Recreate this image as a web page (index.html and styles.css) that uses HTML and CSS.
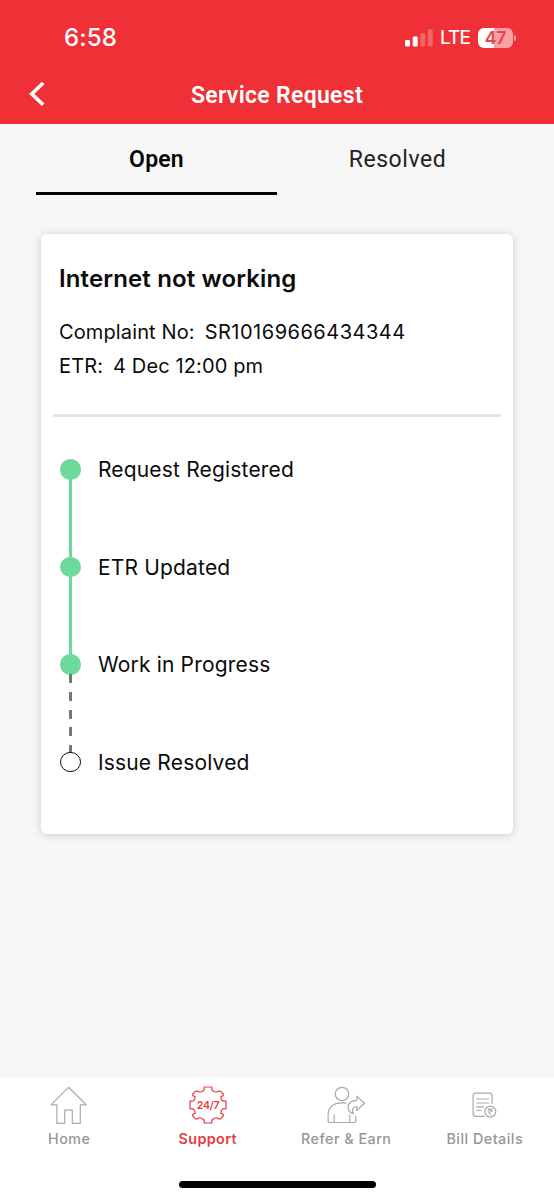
FILE: index.html
```
<!DOCTYPE html>
<html lang="en">
<head>
<meta charset="utf-8">
<title>Service Request</title>
<link rel="stylesheet" href="styles.css">
</head>
<body>
<div class="app">
  <header class="header">
    <div class="status">
      <span class="time">6:58</span>
      <div class="status-right">
        <svg class="signal" width="28" height="18" viewBox="0 0 28 18" fill="#fff">
          <rect x="0" y="11" width="5" height="6.5" rx="1.3"/>
          <rect x="7.7" y="7.5" width="5" height="10" rx="1.3"/>
          <rect x="15.2" y="4" width="5" height="13.5" rx="1.3" opacity=".25"/>
          <rect x="22.7" y="0.3" width="5" height="17.2" rx="1.3" opacity=".25"/>
        </svg>
        <span class="network">LTE</span>
        <div class="battery"><span class="battery-level">47</span><i class="battery-cap"></i></div>
      </div>
    </div>
    <div class="titlebar">
      <svg class="back" width="18" height="26" viewBox="0 0 18 26"><path d="M15.2 2 3.7 12.9 15.2 23.8" fill="none" stroke="#fff" stroke-width="3.6"/></svg>
      <h1 class="title">Service Request</h1>
    </div>
  </header>
  <nav class="tabs">
    <div class="tab tab-active"><span>Open</span></div>
    <div class="tab"><span>Resolved</span></div>
  </nav>
  <main class="main">
    <section class="card">
      <h2 class="card-title">Internet not working</h2>
      <div class="row"><span class="row-label">Complaint No:</span><span class="row-value number">SR10169666434344</span></div>
      <div class="row"><span class="row-label">ETR:</span><span class="row-value">4 Dec 12:00 pm</span></div>
      <div class="divider"></div>
      <ol class="steps">
        <li class="step step-done"><i class="dot"></i><span>Request Registered</span></li>
        <li class="step step-done"><i class="dot"></i><span>ETR Updated</span></li>
        <li class="step step-now"><i class="dot"></i><span>Work in Progress</span></li>
        <li class="step"><i class="dot dot-open"></i><span>Issue Resolved</span></li>
      </ol>
    </section>
  </main>
  <footer class="bottom">
    <div class="nav">
      <div class="nav-item">
        <svg width="40" height="40" viewBox="0 0 40 40" class="icon"><path d="M19.5 2.3 2 19.8H7.9V38.3H15.7V25.2H23.3V38.3H31.3V19.8H37.2Z"/></svg>
        <span>Home</span>
      </div>
      <div class="nav-item nav-active">
        <svg width="40" height="40" viewBox="-20 -20 40 40" class="icon gear">
          <path d="M-3.8-15.2V-18H3.8V-15.2L5.4-13.8 8.3-12.8 10.4-13.8H12.4L15.2-11V-9.4L12.8-8.3 13.4-5.4 15.2-3.8H18V3.8H15.2L13.4 5.4 12.8 8.3 15.2 9.4V11L12.4 13.8H10.4L8.3 12.8 5.4 13.8 3.8 15.2V18H-3.8V15.2L-5.4 13.8-8.3 12.8-10.4 13.8H-12.4L-15.2 11V9.4L-12.8 8.3-13.4 5.4-15.2 3.8H-18V-3.8H-15.2L-13.4-5.4-12.8-8.3-15.2-9.4V-11L-12.4-13.8H-10.4L-8.3-12.8-5.4-13.8Z"/>
          <text x="0" y="4" text-anchor="middle">24/7</text>
        </svg>
        <span>Support</span>
      </div>
      <div class="nav-item">
        <svg width="40" height="40" viewBox="0 0 40 40" class="icon">
          <circle cx="16" cy="9" r="6.7"/>
          <path d="M20 17.9H16C7 17.9 2.1 22.5 2.1 30V35.8Q2.1 37.5 3.8 37.5H28Q29.8 37.5 29.8 35.5V31M8.2 29.8V37.3M23.8 29.8V37.3"/>
          <path d="M30.8 11.3 38.5 18.2 30.8 25.4V21.5C27 21.5 25.2 24.5 27.5 28.7 19.5 27 20 15.5 30.8 15.3Z"/>
        </svg>
        <span>Refer &amp; Earn</span>
      </div>
      <div class="nav-item">
        <svg width="40" height="40" viewBox="0 0 40 40" class="icon">
          <path d="M19 31.3H10.8Q8.1 31.3 8.1 28.6V10.9Q8.1 8.2 10.8 8.2H24.4Q27.1 8.2 27.1 10.9V18.6M11.6 14H23.8M11.6 18H23.8M11.6 21.8H18.8M11.6 25.5H16"/>
          <circle cx="25.3" cy="26.6" r="5.5"/>
          <path class="rupee" d="M23.2 24.1H27.5M23.2 25.9H27.5M23.3 24.1H24.4C27 24.1 27 27.5 24.4 27.5H23.4L26.2 30"/>
        </svg>
        <span>Bill Details</span>
      </div>
    </div>
    <div class="home-bar"></div>
  </footer>
</div>
</body>
</html>
```
FILE: styles.css
```
* { box-sizing: border-box; }
body { margin: 0; background: #f7f7f7; color: #0b0b0b; font-family: Inter, "Liberation Sans", sans-serif; }
.app { width: 554px; height: 1200px; display: flex; flex-direction: column; }
.header { height: 124px; background: #ef3036; color: #fff; }
.status { height: 66px; padding: 9px 41px 0 64px; display: flex; align-items: center; justify-content: space-between; }
.time { font-size: 24px; line-height: 30px; font-weight: 500; letter-spacing: 0.2px; }
.status-right { display: flex; align-items: center; }
.network { margin-left: 7px; width: 38px; font-size: 19px; line-height: 24px; font-weight: 400; letter-spacing: -0.8px; -webkit-text-stroke: 0.2px #fff; }
.battery { position: relative; width: 35px; height: 20px; border-radius: 6px; background: linear-gradient(90deg, #fff 47%, #f8a0a3 47%); display: flex; align-items: center; justify-content: center; color: #e4464c; }
.battery-level { font-size: 17.5px; line-height: 20px; font-weight: 600; }
.battery-cap { position: absolute; left: 36px; top: 7px; width: 2px; height: 6px; border-radius: 0 2px 2px 0; background: #f8a0a3; }
.titlebar { height: 58px; display: grid; grid-template-columns: 60px 1fr 60px; align-items: center; }
.back { margin-left: 28px; margin-top: -2px; }
.title { margin: 2px 0 0; text-align: center; font: 600 23px/28px Roboto, sans-serif; letter-spacing: 0.32px; }
.tabs { height: 72px; padding: 0 36px; display: grid; grid-template-columns: 241px 241px; font-family: Roboto, sans-serif; font-size: 23px; line-height: 28px; }
.tab { text-align: center; padding-top: 22px; height: 71px; letter-spacing: 0.55px; color: #222; }
.tab-active { border-bottom: 3px solid #050505; font-weight: 600; color: #050505; letter-spacing: 0.2px; }
.main { flex: 1; padding: 38px 41px 0; }
.card { height: 600px; padding: 31px 12px 0; background: #fff; border-radius: 6px; box-shadow: 0 1px 10px rgba(0, 0, 0, .18); }
.card-title { margin: 0 0 22px 6px; font-size: 24px; line-height: 28px; font-weight: 600; letter-spacing: 0.14px; }
.row { height: 34px; padding-left: 6px; display: flex; gap: 10px; font-size: 20px; line-height: 34px; letter-spacing: 0.12px; white-space: nowrap; }
.number { letter-spacing: 0.5px; }
.divider { height: 3px; margin-top: 31px; background: #e4e4e4; }
.steps { list-style: none; margin: 42px 0 0; padding: 0 0 0 7.4px; }
.step { position: relative; height: 97.5px; display: flex; align-items: flex-start; gap: 17px; font-size: 21px; line-height: 21px; letter-spacing: 0.18px; white-space: nowrap; }
.dot { width: 20.5px; height: 20.5px; border-radius: 50%; background: #6dda9b; }
.dot-open { background: #fff; border: 2px solid #111; border-width: 1.5px; }
.step-done::after, .step-now::after { content: ""; position: absolute; left: 8.6px; top: 20px; width: 3.5px; height: 78px; background: #6dda9b; }
.step-now::after { background: repeating-linear-gradient(#777 0 9px, transparent 9px 17.8px); }
.bottom { height: 123px; background: #fff; display: flex; flex-direction: column; align-items: center; }
.nav { width: 554px; padding-top: 8px; display: grid; grid-template-columns: repeat(4, 1fr); color: #969696; }
.nav-item { display: flex; flex-direction: column; align-items: center; font-size: 14.3px; line-height: 20px; font-weight: 500; letter-spacing: 0.5px; white-space: nowrap; }
.nav-item span { margin-top: 4px; }
.nav-active { color: #e83b40; letter-spacing: 0.4px; font-weight: 600; }
.icon { display: block; fill: none; stroke: #aaa; stroke-width: 1.2; stroke-linejoin: round; stroke-linecap: round; }
.rupee { stroke-width: 1; }
.gear { stroke: #e83b40; }
.gear text { fill: #e83b40; stroke: none; font: 600 10.5px Inter, sans-serif; letter-spacing: -0.2px; }
.home-bar { margin-top: 32px; width: 197px; height: 7px; border-radius: 4px; background: #000; }
```
